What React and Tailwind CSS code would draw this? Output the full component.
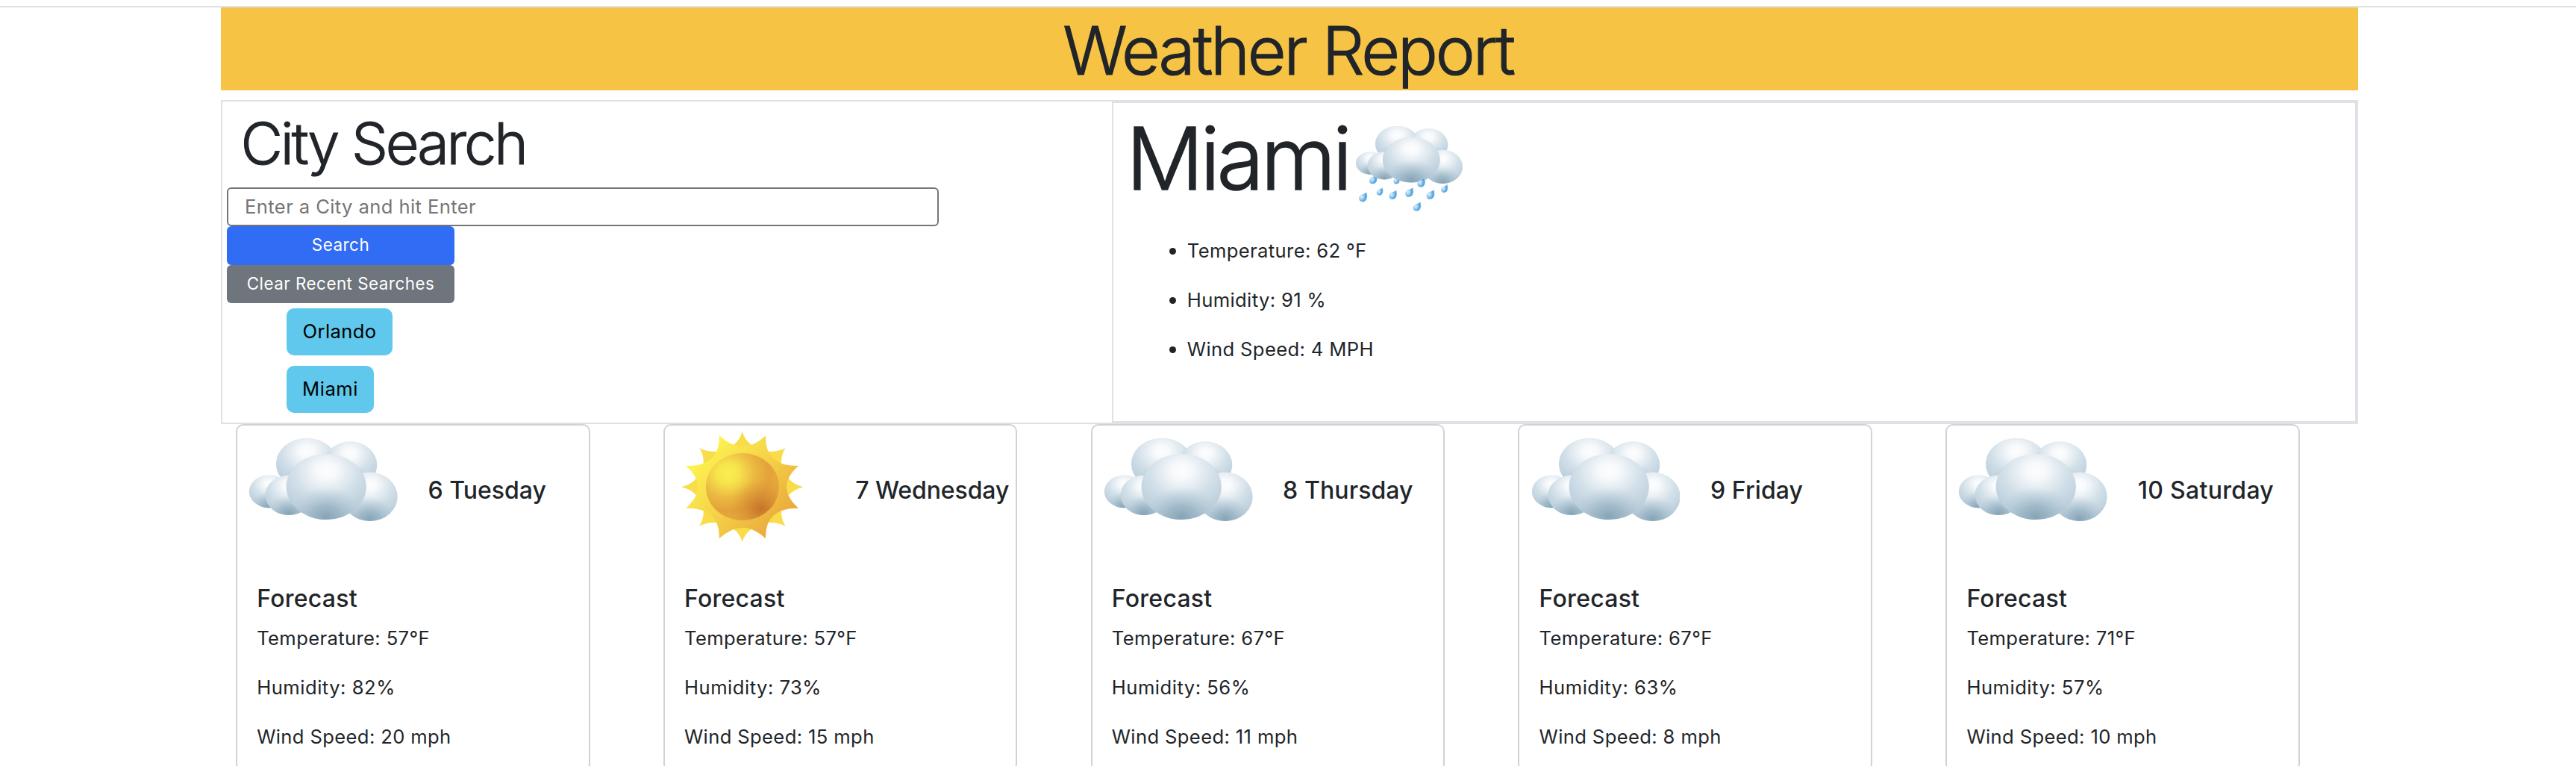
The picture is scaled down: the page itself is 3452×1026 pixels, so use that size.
import React, { useId } from "react";

const PUFFS = [
  [111.4, 61, 41.2, 34.6],
  [169.6, 62.5, 36, 31.5],
  [61, 98, 26.8, 22],
  [196, 105, 37, 32.7],
  [87.3, 103, 31.5, 26.7],
  [137.5, 91.7, 53.6, 44],
];

function CloudIcon({ className }) {
  const id = useId();
  return (
    <svg className={className} viewBox="34.3 26.7 198.7 111" preserveAspectRatio="none">
      <defs>
        <radialGradient id={id + "l"} cx="0.5" cy="0.26" r="0.68">
          <stop offset="0" stopColor="#fdfdfe" />
          <stop offset="0.18" stopColor="#f7f9fb" />
          <stop offset="0.6" stopColor="#d1dfe8" />
          <stop offset="0.85" stopColor="#c3d4e0" />
          <stop offset="1" stopColor="#bacdda" />
        </radialGradient>
        <radialGradient id={id + "d"} cx="0.5" cy="0.96" r="0.46">
          <stop offset="0" stopColor="#83a2b5" stopOpacity="0.95" />
          <stop offset="0.4" stopColor="#8dabbd" stopOpacity="0.62" />
          <stop offset="1" stopColor="#a9c1cf" stopOpacity="0" />
        </radialGradient>
      </defs>
      {PUFFS.map(([cx, cy, rx, ry]) => (
        <g key={cx}>
          <ellipse cx={cx} cy={cy} rx={rx} ry={ry} fill={`url(#${id}l)`} />
          <ellipse cx={cx} cy={cy} rx={rx} ry={ry} fill={`url(#${id}d)`} />
        </g>
      ))}
    </svg>
  );
}

/* x, y, scale of each raindrop, in thirds of a pixel */
const DROPS_BEHIND = [
  [181, 300, 1],
  [275, 304, 0.8],
];
const DROPS_FRONT = [
  [374, 313, 1],
  [467, 337, 0.88],
  [207, 349, 0.84],
  [260, 362, 1],
  [326, 352, 1.03],
  [411, 361, 1.03],
  [140, 371, 1.05],
  [357, 409, 1],
];

function Drops({ drops, className }) {
  const id = useId();
  return (
    <svg className={className} viewBox="111 86 429 342">
      <defs>
        <radialGradient id={id} cx="0.3" cy="0.48" r="0.72">
          <stop offset="0" stopColor="#e4f3fb" />
          <stop offset="0.45" stopColor="#8cc6ea" />
          <stop offset="0.75" stopColor="#4a9fdb" />
          <stop offset="1" stopColor="#a5d2ee" />
        </radialGradient>
      </defs>
      {drops.map(([x, y, s]) => (
        <path
          key={x}
          transform={`translate(${x} ${y}) scale(${s})`}
          d="M14 -20C17 -6 17 4 11 12C5 19 -8 20 -13 13C-18 5 -15 -5 -7 -9C0 -12 8 -12 14 -20Z"
          fill={`url(#${id})`}
        />
      ))}
    </svg>
  );
}

function RainIcon() {
  return (
    <div className="grid h-[114px] w-[143px] shrink-0 items-start">
      <Drops drops={DROPS_BEHIND} className="col-start-1 row-start-1 h-[114px] w-[143px]" />
      <CloudIcon className="col-start-1 row-start-1 h-[77px] w-[143px]" />
      <Drops drops={DROPS_FRONT} className="col-start-1 row-start-1 h-[114px] w-[143px]" />
    </div>
  );
}

function SunIcon({ className }) {
  const id = useId();
  return (
    <svg className={className} viewBox="121 54 457 444" preserveAspectRatio="none">
      <defs>
        <linearGradient id={id + "r"} x1="0.15" y1="0.2" x2="0.88" y2="0.82">
          <stop offset="0" stopColor="#fdf150" />
          <stop offset="0.5" stopColor="#f4d048" />
          <stop offset="1" stopColor="#eaa93b" />
        </linearGradient>
        <radialGradient id={id + "b"} cx="0.3" cy="0.3" r="0.75">
          <stop offset="0" stopColor="#faf04f" />
          <stop offset="0.2" stopColor="#f6e44c" />
          <stop offset="0.5" stopColor="#ebb741" />
          <stop offset="0.75" stopColor="#e3a23a" />
          <stop offset="1" stopColor="#e6ab3e" />
        </radialGradient>
        <radialGradient id={id + "s"} cx="0.76" cy="0.83" r="0.45">
          <stop offset="0" stopColor="#c6732a" />
          <stop offset="0.3" stopColor="#cd7e2d" stopOpacity="0.75" />
          <stop offset="1" stopColor="#dd9536" stopOpacity="0" />
        </radialGradient>
      </defs>
      <path
        fill="#f9dc49"
        d="M349 54Q341 88 317 108L349 276L384 108Q358 88 349 54Z
           M511 120Q484 136 448 134L349 276L496 182Q494 148 511 120Z
           M578 277Q544 268 523 243L349 276L523 310Q544 286 578 277Z
           M511 434Q484 418 448 420L349 276L496 372Q494 406 511 434Z
           M349 498Q341 464 317 446L349 276L384 446Q358 464 349 498Z
           M188 434Q215 418 250 420L349 276L204 372Q206 406 188 434Z
           M121 277Q156 268 177 243L349 276L177 310Q156 286 121 277Z
           M188 120Q215 136 250 134L349 276L204 182Q206 148 188 120Z"
      />
      <path
        fill={`url(#${id}r)`}
        d="M263 70Q350 158 437 70Q433 195 560 192Q470 277 560 362Q433 359 437 484Q350 396 263 484Q267 359 138 362Q228 277 138 192Q267 195 263 70Z"
      />
      <ellipse cx="350" cy="276" rx="137" ry="135" fill={`url(#${id}b)`} />
      <ellipse cx="350" cy="276" rx="137" ry="135" fill={`url(#${id}s)`} />
    </svg>
  );
}

const DAYS = [
  { day: "6 Tuesday", track: "tracking-normal", temp: 57, humidity: 82, wind: 20 },
  { day: "7 Wednesday", track: "tracking-[-0.1px]", temp: 57, humidity: 73, wind: 15, sunny: true },
  { day: "8 Thursday", track: "tracking-[0.1px]", temp: 67, humidity: 56, wind: 11 },
  { day: "9 Friday", track: "tracking-[0.1px]", temp: 67, humidity: 63, wind: 8 },
  { day: "10 Saturday", track: "tracking-[0.3px]", temp: 71, humidity: 57, wind: 10 },
];

function DayCard({ day, track, temp, humidity, wind, sunny }) {
  return (
    <div className="ml-5 h-[465px] w-[474.6px] rounded-[10px] border-2 border-[#d2d2d2]">
      <div className="flex h-[211px]">
        <div className="w-[255.5px] shrink-0">
          {sunny ? (
            <SunIcon className="mt-2 ml-[22px] h-[148px] w-[163.5px]" />
          ) : (
            <CloudIcon className="mt-[16.7px] ml-[16.3px] h-[111px] w-[198.7px]" />
          )}
        </div>
        <h5 className={`mt-[67px] text-[32px] leading-10 font-medium whitespace-nowrap ${track}`}>{day}</h5>
      </div>
      <div className="pt-[0.5px] pl-[26.2px]">
        <h5 className="text-[32px] leading-10 font-medium tracking-[0.25px]">Forecast</h5>
        <p className="leading-[66px]">Temperature: {temp}°F</p>
        <p className="leading-[66px] tracking-[0.5px]">Humidity: {humidity}%</p>
        <p className="leading-[66px]">Wind Speed: {wind} mph</p>
      </div>
    </div>
  );
}

export default function App() {
  return (
    <div className="h-[1026px] overflow-hidden bg-white font-['Inter',sans-serif] text-[25.6px] tracking-[0.37px] text-[#212529]">
      <div className="h-[10px] border-b-2 border-[#e1e1e1]" />
      <main className="ml-[296px] w-[2864px]">
        <header className="mb-[13px] h-[111px] bg-[#f6c344] pt-[2px] pr-[4px] text-center text-[89.4px] leading-[111px] font-light tracking-[-3.05px] [-webkit-text-stroke:1.2px]">
          Weather Report
        </header>

        <section className="flex h-[434px] border-2 border-[#dee2e6]">
          <div className="w-[1192px] shrink-0 pl-[6px]">
            <h1 className="mt-2 pl-[18.6px] text-[77.5px] leading-[96px] font-light tracking-[-3.17px] [-webkit-text-stroke:1.1px]">
              City Search
            </h1>
            <input
              className="mt-[11px] block h-[52px] w-[954px] rounded-[6px] border-2 border-[#767676] pb-px pl-[22px] tracking-[0.4px] placeholder:text-[#757575]"
              placeholder="Enter a City and hit Enter"
            />
            <button className="block h-[52px] w-[305px] rounded-[6px] bg-[#316cf4] pb-[2px] text-[22.4px] tracking-[0.5px] text-white">
              Search
            </button>
            <button className="block h-[51px] w-[305px] rounded-[6px] bg-[#6e757c] pb-px text-[22.4px] tracking-[0.48px] text-white">
              Clear Recent Searches
            </button>
            <div className="mt-[7px] ml-20 flex flex-col items-start gap-[14px]">
              <button className="h-[63px] w-[142px] rounded-[10px] bg-[#5fc8ec] tracking-[0.37px] text-black">Orlando</button>
              <button className="h-[63px] w-[117px] rounded-[10px] bg-[#5fc8ec] tracking-[0.5px] text-black">Miami</button>
            </div>
          </div>

          <div className="flex-1 border-2 border-[#dee2e6]">
            <div className="mt-[2px] flex h-36 pl-[17px]">
              <h1 className="w-[308px] text-[115.5px] leading-[144px] font-light tracking-[-4.67px] [-webkit-text-stroke:1.5px]">
                Miami
              </h1>
              <div className="mt-[28.7px]">
                <RainIcon />
              </div>
            </div>
            <ul className="mt-[19.2px] pl-[75px]">
              {["Temperature: 62 °F", "Humidity: 91 %", "Wind Speed: 4 MPH"].map((text) => (
                <li key={text} className="flex h-[66px] items-center gap-[14.8px]">
                  <span className="size-[9px] rounded-full bg-[#212529]" />
                  {text}
                </li>
              ))}
            </ul>
          </div>
        </section>

        <section className="grid grid-cols-5">
          {DAYS.map((d) => (
            <DayCard key={d.day} {...d} />
          ))}
        </section>
      </main>
    </div>
  );
}
